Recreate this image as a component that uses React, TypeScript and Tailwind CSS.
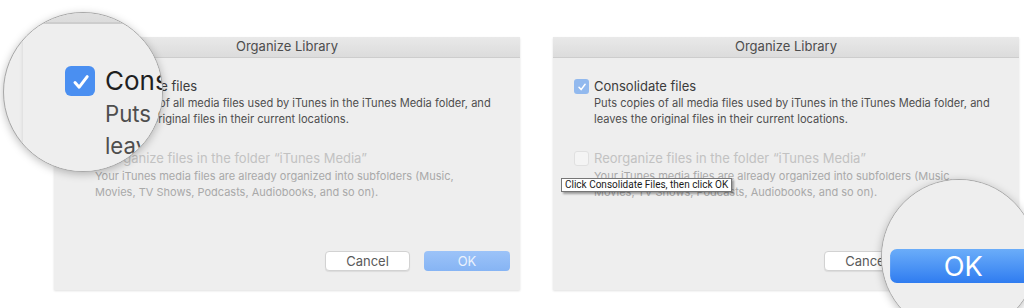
import React from 'react'

function CheckBox({ checked, vivid }: { checked: boolean; vivid?: boolean }) {
  if (!checked) {
    return <div className="w-[15px] h-[15px] shrink-0 rounded-[3px] border border-[#e0e0e0] bg-[#f4f4f4]" />
  }
  return (
    <div
      className={
        'w-[15px] h-[15px] shrink-0 rounded-[3px] flex items-center justify-center ' +
        (vivid ? 'bg-[#4a8ff1]' : 'bg-[#92b9ee]')
      }
    >
      <svg width="10" height="10" viewBox="0 0 10 10" fill="none">
        <path d="M2 5.3 L4.1 7.6 L8.1 2.3" stroke="white" strokeWidth="1.5" strokeLinecap="round" strokeLinejoin="round" />
      </svg>
    </div>
  )
}

function Dialog({ vivid }: { vivid?: boolean }) {
  return (
    <div className="w-[466px] h-[253px] flex flex-col bg-[#eeeeee] shadow-[0_1px_2px_rgba(0,0,0,0.12)] font-[Inter,sans-serif]">
      <div className="h-[21px] flex items-center justify-center bg-gradient-to-b from-[#e9e9e9] to-[#dcdcdc] border-b border-[#cdcdcd] text-[13px] text-[#4d4d4d]">
        Organize Library
      </div>
      <div className="flex-1 flex flex-col px-[21px] pt-[21px] pb-[19px]">
        <div className="flex items-center gap-[5px] h-[15px]">
          <CheckBox checked vivid={vivid} />
          <span className={'text-[13px] leading-[15px] ' + (vivid ? 'text-[#1f1f1f]' : 'text-[#3b3b3b]')}>Consolidate files</span>
        </div>
        <div className="pl-[20px] mt-[1px] text-[11.1px] leading-[16px] text-[#4e4e4e]">
          <div>Puts copies of all media files used by iTunes in the iTunes Media folder, and</div>
          <div>leaves the original files in their current locations.</div>
        </div>
        <div className="flex items-center gap-[5px] h-[15px] mt-[24px]">
          <CheckBox checked={false} />
          <span className="text-[13px] leading-[15px] text-[#c2c2c2]">Reorganize files in the folder “iTunes Media”</span>
        </div>
        <div className="pl-[20px] mt-[2px] text-[11px] leading-[16px] text-[#a9a9a9]">
          <div>Your iTunes media files are already organized into subfolders (Music,</div>
          <div>Movies, TV Shows, Podcasts, Audiobooks, and so on).</div>
        </div>
        <div className="mt-auto flex justify-end gap-[14px] mr-[-11px]">
          <button className="w-[85px] h-[20px] rounded-[4px] bg-white border border-[#d2d2d2] shadow-[0_1px_1px_rgba(0,0,0,0.08)] text-[13px] leading-[18px] text-[#5a5a5a]">
            Cancel
          </button>
          <button
            className={
              'w-[86px] h-[20px] rounded-[4px] ' +
              (vivid
                ? 'bg-gradient-to-b from-[#6badf9] to-[#2f7cf0] text-white text-[16px] leading-[20px]'
                : 'bg-gradient-to-b from-[#9cc3f8] to-[#86b4f4] text-[#eaf2fd] text-[13px] leading-[20px]')
            }
          >
            OK
          </button>
        </div>
      </div>
    </div>
  )
}

export default function App() {
  return (
    <div className="relative w-[1024px] h-[308px] overflow-hidden bg-white">
      <div className="flex gap-[33px] pt-[37px] pl-[54px]">
        <Dialog />
        <Dialog />
      </div>

      {/* tooltip */}
      <div className="absolute left-[561px] top-[178px] h-[14px] px-[3px] flex items-center bg-white border border-[#767676] shadow-[2px_2px_2px_rgba(0,0,0,0.35)] text-[10px] leading-[12px] text-[#1a1a1a] font-[Roboto,sans-serif] whitespace-nowrap">
        Click Consolidate Files, then click OK
      </div>

      {/* left magnifier, 2x around (85, 92) */}
      <div className="absolute left-[3px] top-[12px] w-[160px] h-[160px] rounded-full overflow-hidden bg-[#eeeeee] border-[1.5px] border-[#a8a8a8] shadow-[0_2px_8px_rgba(0,0,0,0.25)]">
        <div className="absolute left-[49.5px] top-[23.5px] scale-200 origin-[31px_55px]">
          <Dialog vivid />
        </div>
      </div>

      {/* right magnifier, 1.7x around (970, 254) */}
      <div className="absolute left-[881px] top-[179px] w-[156px] h-[156px] rounded-full overflow-hidden bg-[#eeeeee] border-[1.5px] border-[#a8a8a8] shadow-[0_2px_8px_rgba(0,0,0,0.25)]">
        <div className="absolute left-[-329.5px] top-[-143.5px] scale-[1.7] origin-[417px_217px]">
          <Dialog vivid />
        </div>
      </div>
    </div>
  )
}
